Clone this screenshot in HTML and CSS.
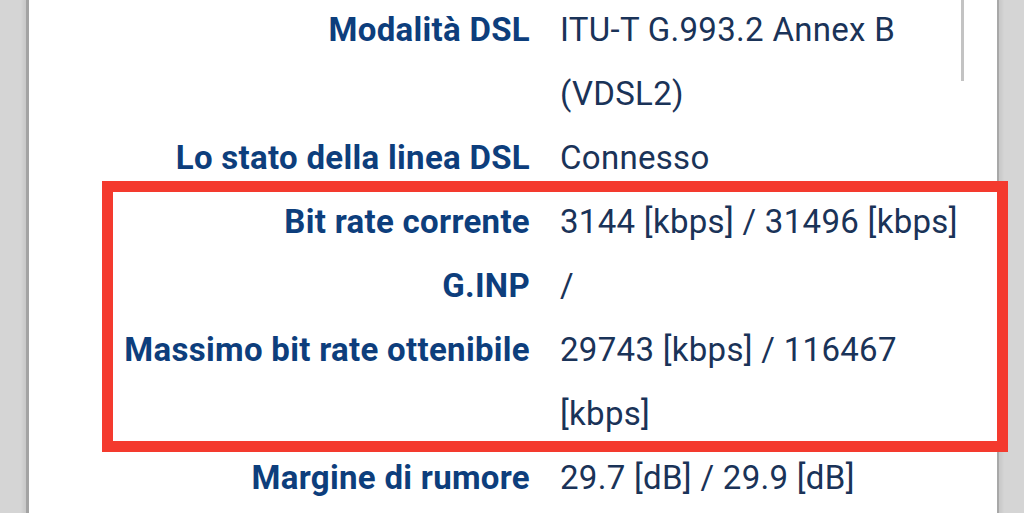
FILE: index.html
```html
<!DOCTYPE html>
<html lang="it">
<head>
<meta charset="utf-8">
<title>DSL</title>
<link rel="stylesheet" href="styles.css">
</head>
<body>
<div class="panel">
  <div class="scroll-thumb"></div>
  <div class="list">
    <div class="row"><div class="label">Modalità DSL</div><div class="value">ITU-T G.993.2 Annex B (VDSL2)</div></div>
    <div class="row"><div class="label">Lo stato della linea DSL</div><div class="value">Connesso</div></div>
    <div class="group">
      <div class="row"><div class="label">Bit rate corrente</div><div class="value">3144 [kbps] / 31496 [kbps]</div></div>
      <div class="row"><div class="label">G.INP</div><div class="value">/</div></div>
      <div class="row"><div class="label">Massimo bit rate ottenibile</div><div class="value">29743 [kbps] / 116467 [kbps]</div></div>
    </div>
    <div class="row"><div class="label">Margine di rumore</div><div class="value">29.7 [dB] / 29.9 [dB]</div></div>
  </div>
</div>
</body>
</html>
```
FILE: styles.css
```css
html, body {
  margin: 0;
  height: 100%;
  overflow: hidden;
}
body {
  background: #d5d5d5;
  font-family: Roboto, "Liberation Sans", sans-serif;
}
.panel {
  position: relative;
  margin: 0 25px 0 26px;
  min-height: 640px;
  background: #ffffff;
  border-left: 3px solid #a3a3a3;
  border-right: 2px solid #a8a8a8;
  box-shadow: -3px 0 3px rgba(0,0,0,0.06), 3px 0 3px rgba(0,0,0,0.06);
}
.scroll-thumb {
  position: absolute;
  left: 932px;
  top: 0;
  width: 3px;
  height: 83px;
  background: #c3c3c3;
}
.list {
  margin-top: -2px;
  display: flex;
  flex-direction: column;
}
.row {
  display: grid;
  grid-template-columns: 501px 415px;
  column-gap: 30px;
  font-size: 33px;
  letter-spacing: 0.3px;
  line-height: 64px;
}
.label {
  text-align: right;
  font-weight: 700;
  color: #0d3e7c;
}
.value {
  color: #1a3358;
}
.group {
  position: relative;
}
.group::after {
  content: "";
  position: absolute;
  top: -9px;
  bottom: -6px;
  left: 73px;
  right: -11px;
  border: 11px solid #f43a2e;
}
```
